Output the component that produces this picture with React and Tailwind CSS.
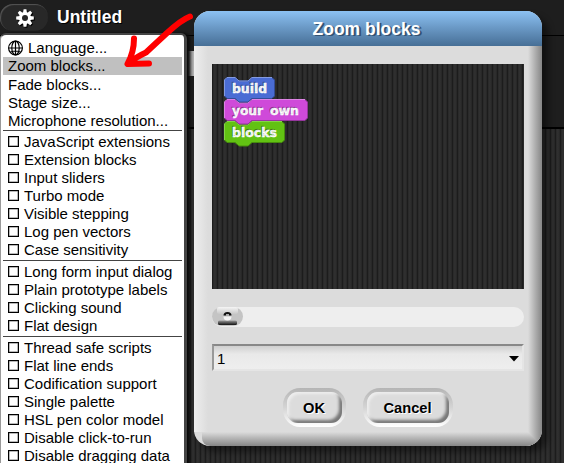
import React from "react";

const STRIPES =
  "bg-[repeating-linear-gradient(90deg,#1c1c1c_0px,#1c1c1c_1px,#2a2a2a_1px,#2a2a2a_2px,#303030_2px,#2d2d2d_4px,#282828_4px,#282828_5px)]";

const groups = [
  ["JavaScript extensions", "Extension blocks", "Input sliders", "Turbo mode", "Visible stepping", "Log pen vectors", "Case sensitivity"],
  ["Long form input dialog", "Plain prototype labels", "Clicking sound", "Flat design"],
  ["Thread safe scripts", "Flat line ends", "Codification support", "Single palette", "HSL pen color model", "Disable click-to-run", "Disable dragging data"],
];

function Gear() {
  return (
    <svg className="ml-px mt-px h-[18px] w-[18px] drop-shadow-[1px_1px_0_#000]" viewBox="-9 -9 18 18">
      {[0, 45, 90, 135].map((a) => (
        <path key={a} d="M-1.4 -8.8H1.4L2 -5V5L1.4 8.8H-1.4L-2 5V-5Z" fill="#fff" transform={`rotate(${a})`} />
      ))}
      <circle r="6" fill="#fff" />
      <circle r="3" fill="#252525" />
    </svg>
  );
}

function Globe() {
  return (
    <svg className="h-4 w-4 shrink-0" viewBox="0 0 16 16" fill="none" stroke="#000" strokeWidth="1.2">
      <circle cx="7.5" cy="8" r="6.9" />
      <ellipse cx="7.5" cy="8" rx="3.7" ry="6.9" />
      <path d="M7.5 1v14M.8 8h13.4M2.3 12.2q5.2-2.4 10.4 0" />
    </svg>
  );
}

function Menu() {
  return (
    <div className="absolute left-0 top-[33px] h-[440px] w-[187px] rounded-t-[6px] border-l border-r-[3px] border-t-2 border-[#444] border-l-[#999] bg-white pl-[2px] pr-[2px] pt-1 text-[15px] leading-[18px] text-black shadow-[3px_0_3px_#0a0a0a]">
      <div className="flex h-[18px] items-center gap-1 pl-[5px]">
        <Globe />
        <span>Language...</span>
      </div>
      <div className="h-[18px] bg-[#c0c0c0] pl-[5px]">Zoom blocks...</div>
      <div className="mt-px h-[18px] pl-[5px]">Fade blocks...</div>
      <div className="h-[18px] pl-[5px]">Stage size...</div>
      <div className="h-[18px] pl-[5px]">Microphone resolution...</div>
      {groups.map((g) => (
        <div key={g[0]} className="pb-px">
          <div className="mb-[2px] h-px bg-[#444]" />
          {g.map((t) => (
            <div key={t} className="flex h-[18px] items-center gap-[5px] pl-[5px]">
              <span className="mb-px h-[11px] w-[11px] shrink-0 border border-black shadow-[inset_0_0_0_0.5px_#777]" />
              <span className="whitespace-nowrap">{t}</span>
            </div>
          ))}
        </div>
      ))}
    </div>
  );
}

function Blocks() {
  const row = (y, w, color, dark, light, words) => (
    <g transform={`translate(0 ${y})`}>
      <path
        d={`M.5 3L3 .5H11L15 4H24L28 .5H${w - 3}L${w - 0.5} 3V19L${w - 3} 21.5H28L24 25H15L11 21.5H3L.5 19Z`}
        fill={color}
        stroke={dark}
      />
      <path d={`M.5 19V3L3 .5H11L15 4H24L28 .5H${w - 3}`} fill="none" stroke={light} />
      {words.map(([word, x, length]) => (
        <text
          key={word}
          x={x}
          y="16"
          textLength={length}
          lengthAdjust="spacingAndGlyphs"
          fill="#fff"
          stroke="#fff"
          strokeWidth="0.4"
          fontSize="13"
          fontWeight="bold"
          className="[text-shadow:-1px_-1px_0_rgba(0,0,0,.3)]"
        >
          {word}
        </text>
      ))}
    </g>
  );
  return (
    <svg className="block h-[72px] w-[90px] font-['DejaVu_Sans',sans-serif]" viewBox="0 0 90 72">
      {row(44, 61, "#62c213", "#478c0d", "#85d548", [["blocks", 8, 45]])}
      {row(22, 84, "#cf4ad9", "#95369c", "#dd83e4", [["your", 8, 31], ["own", 46, 29]])}
      {row(0, 51, "#4a6cd4", "#344c96", "#839ae1", [["build", 8, 35]])}
    </svg>
  );
}

function Button({ children, wide }) {
  return (
    <div className={`h-[39px] rounded-[17px] bg-linear-to-b from-[#b5b5b5] via-[#d4d4d4] to-white p-1 ${wide ? "w-[90px]" : "w-[63px]"}`}>
      <div className="flex h-[31px] items-center justify-center rounded-[11px] bg-[#dcdcdc] pr-px pt-[2px] text-[14.7px] font-bold text-black shadow-[inset_2px_2px_3px_#eee,inset_-3px_-3px_3px_#777] [text-shadow:1px_1px_0_#fff]">
        {children}
      </div>
    </div>
  );
}

function Thumb() {
  return (
    <svg className="block h-[19px] w-[31px]" viewBox="0 0 31 19">
      <defs>
        <linearGradient id="thumbTop" x2="0" y2="1">
          <stop stopColor="#f5f5f5" />
          <stop offset="1" stopColor="#c8c8c8" />
        </linearGradient>
        <linearGradient id="thumbBottom" x2="0" y2="1">
          <stop stopColor="#999" />
          <stop offset="1" stopColor="#111" />
        </linearGradient>
      </defs>
      <rect width="31" height="19" rx="9.5" fill="#c4c4c4" />
      <rect x="5" y="0" width="21" height="7" rx="2" fill="url(#thumbTop)" />
      <rect x="6" y="13.500" width="19" height="4.500" rx="1.5" fill="url(#thumbBottom)" />
      <path d="M11.500 8.500a4 3.500 0 0 1 8 0Z" fill="#111" />
      <path d="M11.500 9.500h8a4 4 0 0 1-8 0Z" fill="#f4f4f4" />
      <rect x="14" y="7" width="3" height="2" fill="#aaa" />
    </svg>
  );
}

function Dialog() {
  return (
    <div className="absolute left-[194px] top-[11px] h-[435px] w-[348px] rounded-[16px] shadow-[6px_6px_7px_rgba(0,0,0,0.45)]">
      <div className="relative h-[435px] overflow-hidden rounded-[16px] bg-[#dcdcdc]">
        <div className="flex h-[35px] items-center justify-center bg-linear-to-b from-[#8cc1f3] to-[#476f96] pr-[3px] pt-px text-[17.5px] font-bold text-white [text-shadow:2px_1px_0_#345373]">
          Zoom blocks
        </div>
        <div className="flex h-[400px]">
          <div className="h-[386px] w-[14px] shrink-0 bg-linear-to-r from-[#eee] to-[#dcdcdc]" />
          <div className="flex w-[320px] flex-col pl-1 pt-[18px]">
            <div className={`h-[225px] w-[312px] pl-3 pt-[13px] ${STRIPES}`}>
              <Blocks />
            </div>
            <div className="mt-[18px] h-[20px] w-[312px] rounded-full bg-[#eee]">
              <Thumb />
            </div>
            <div className="mt-[17px] flex h-[27px] w-[312px] items-center justify-between border-2 border-b-[#e5e5e5] border-l-[#999] border-r-[#e5e5e5] border-t-[#888] bg-linear-to-b from-[#cfcfcf] via-[#e9e9e9] via-35% to-[#eee] pl-[3px] pr-[3px] pt-[3px] text-[15px] text-black">
              <span>1</span>
              <svg className="mb-px h-[6px] w-[10px]" viewBox="0 0 10 6">
                <path d="M0 0H10L5 5.500Z" />
              </svg>
            </div>
            <div className="mt-[17px] flex gap-[17px] pl-[71px]">
              <Button>OK</Button>
              <Button wide>Cancel</Button>
            </div>
          </div>
          <div className="h-[400px] w-[14px] shrink-0 bg-linear-to-r from-[#dcdcdc] to-[#868686]" />
        </div>
        <div className="absolute bottom-0 left-[8px] right-0 h-[14px] rounded-bl-[8px] bg-linear-to-b from-[#dcdcdc] to-[#868686] [clip-path:polygon(0_0,calc(100%-14px)_0,100%_100%,0_100%)]" />
      </div>
    </div>
  );
}

export default function App() {
  return (
    <div className="relative h-[463px] w-[564px] overflow-hidden bg-[#1e1e1e] font-['Liberation_Sans',Arial,sans-serif]">
      <div className="flex h-[36px] items-start border-b border-black">
        <div className="mt-1 flex h-[27px] w-[48px] items-center justify-center rounded-[13px] bg-[#282828] shadow-[inset_1px_1px_1px_#555]">
          <Gear />
        </div>
        <div className="ml-[9px] mt-[6px] text-[17.5px] font-bold leading-[22px] text-white [text-shadow:1px_1px_0_#000]">Untitled</div>
      </div>
      <div className="h-[15px]" />
      <div className="h-[25px] w-[194px] bg-linear-to-r from-[#555] from-96% to-[#bbb]" />
      <div className="h-[53px] border-b-2 border-black" />
      <div className={`h-[334px] ${STRIPES}`} />
      <Menu />
      <Dialog />
      <svg
        className="absolute left-[120px] top-[10px] h-[60px] w-[80px]"
        viewBox="120 10 80 60"
        fill="none"
        stroke="#f00"
        strokeWidth="6"
        strokeLinecap="round"
        strokeLinejoin="round"
      >
        <path d="M190 16.500Q181 20 167 33Q154 45 146 52.500Q138 56 128 63.500M134 38.500Q134 52 127.500 64L149 63.500" />
      </svg>
    </div>
  );
}
